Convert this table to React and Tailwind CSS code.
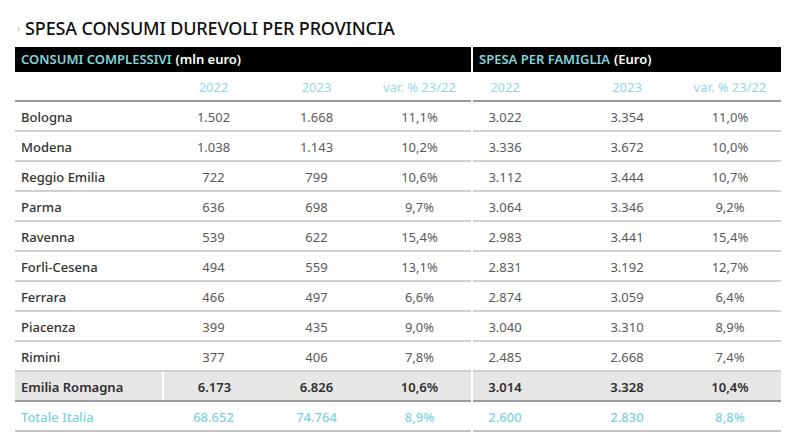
import React from 'react';

const rows = [
    ['Bologna', '1.502', '1.668', '11,1%', '3.022', '3.354', '11,0%'],
    ['Modena', '1.038', '1.143', '10,2%', '3.336', '3.672', '10,0%'],
    ['Reggio Emilia', '722', '799', '10,6%', '3.112', '3.444', '10,7%'],
    ['Parma', '636', '698', '9,7%', '3.064', '3.346', '9,2%'],
    ['Ravenna', '539', '622', '15,4%', '2.983', '3.441', '15,4%'],
    ['Forlì-Cesena', '494', '559', '13,1%', '2.831', '3.192', '12,7%'],
    ['Ferrara', '466', '497', '6,6%', '2.874', '3.059', '6,4%'],
    ['Piacenza', '399', '435', '9,0%', '3.040', '3.310', '8,9%'],
    ['Rimini', '377', '406', '7,8%', '2.485', '2.668', '7,4%'],
];

const regione = ['Emilia Romagna', '6.173', '6.826', '10,6%', '3.014', '3.328', '10,4%'];
const italia = ['Totale Italia', '68.652', '74.764', '8,9%', '2.600', '2.830', '8,8%'];

// left half: name | 2022 | 2023 | var
const LeftCells = ({ r, nameCls, numCls, split }) => (
    <>
        <div className={`w-[147px] pl-[6px] pt-[4px] ${nameCls}`}>{r[0]}</div>
        <div className={`w-[103px] h-full pt-[4px] flex items-center justify-center ${numCls} ${split ? 'border-l-2 border-white' : ''}`}>{r[1]}</div>
        <div className={`w-[103px] pt-[4px] text-center ${numCls}`}>{r[2]}</div>
        <div className={`w-[103px] pt-[4px] text-center ${numCls}`}>{r[3]}</div>
    </>
);

const RightCells = ({ r, numCls }) => (
    <>
        <div className={`w-[64px] pt-[4px] text-center ${numCls}`}>{r[4]}</div>
        <div className="w-[38px]" />
        <div className={`w-[104px] pt-[4px] text-center ${numCls}`}>{r[5]}</div>
        <div className={`w-[102px] pt-[4px] text-center ${numCls}`}>{r[6]}</div>
    </>
);

const App = () => {
    const font = { fontFamily: '"Noto Sans", "Open Sans", Arial, sans-serif' };
    return (
        <div className="w-[800px] h-[441px] bg-white text-[13px]" style={font}>
            {/* titolo */}
            <div className="flex items-center h-[47px] pl-[17px] pt-[10px]">
                <span className="text-[10px] text-[#bbbbbb] mr-[5px]">›</span>
                <span className="text-[18px] font-medium text-[#111111] tracking-[-0.15px]">SPESA CONSUMI DUREVOLI PER PROVINCIA</span>
            </div>

            <div className="flex pl-[15px]">
                {/* consumi complessivi */}
                <div className="w-[456px] flex flex-col">
                    <div className="h-[25px] bg-black flex items-center pl-[6px] pt-[1px] font-semibold">
                        <span className="text-[#7fd6de]">CONSUMI COMPLESSIVI</span>
                        <span className="text-white ml-[4px]">(mln euro)</span>
                    </div>
                    <div className="h-[30px] flex items-center pt-[4px] text-[#92d9e0] border-b-2 border-[#9a9a9a]">
                        <div className="w-[147px]" />
                        <div className="w-[103px] text-center">2022</div>
                        <div className="w-[103px] text-center">2023</div>
                        <div className="w-[103px] text-center">var. % 23/22</div>
                    </div>
                    {rows.map(r => (
                        <div key={r[0]} className="h-[30px] flex items-center border-b-2 border-[#d0d0d0]">
                            <LeftCells r={r} nameCls="text-[#333333] font-medium" numCls="text-[#5a5a5a]" />
                        </div>
                    ))}
                    <div className="h-[30px] flex items-center bg-[#e6e6e6] border-b-2 border-[#9a9a9a]">
                        <LeftCells r={regione} nameCls="text-[#2e2e2e] font-semibold" numCls="text-[#2e2e2e] font-semibold" split />
                    </div>
                    <div className="h-[30px] flex items-center border-b-2 border-[#c4c4c4]">
                        <LeftCells r={italia} nameCls="text-[#7dd3dc] font-medium" numCls="text-[#7dd3dc] font-medium" />
                    </div>
                </div>

                <div className="w-[2px]" />

                {/* spesa per famiglia */}
                <div className="w-[308px] flex flex-col">
                    <div className="h-[25px] bg-black flex items-center pl-[6px] pt-[1px] font-semibold">
                        <span className="text-[#7fd6de]">SPESA PER FAMIGLIA</span>
                        <span className="text-white ml-[4px]">(Euro)</span>
                    </div>
                    <div className="h-[30px] flex items-center pt-[4px] text-[#92d9e0] border-b-2 border-[#9a9a9a]">
                        <div className="w-[64px] text-center">2022</div>
                        <div className="w-[38px]" />
                        <div className="w-[104px] text-center">2023</div>
                        <div className="w-[102px] text-center">var. % 23/22</div>
                    </div>
                    {rows.map(r => (
                        <div key={r[0]} className="h-[30px] flex items-center border-b-2 border-[#d0d0d0]">
                            <RightCells r={r} numCls="text-[#5a5a5a]" />
                        </div>
                    ))}
                    <div className="h-[30px] flex items-center bg-[#e6e6e6] border-b-2 border-[#9a9a9a]">
                        <RightCells r={regione} numCls="text-[#2e2e2e] font-semibold" />
                    </div>
                    <div className="h-[30px] flex items-center border-b-2 border-[#c4c4c4]">
                        <RightCells r={italia} numCls="text-[#7dd3dc] font-medium" />
                    </div>
                </div>
            </div>
        </div>
    );
};

export default App;
